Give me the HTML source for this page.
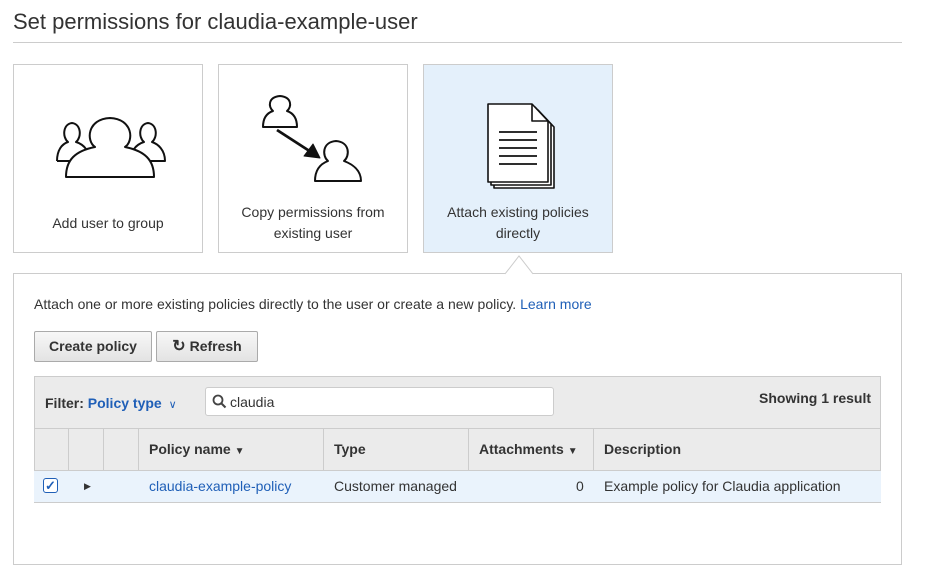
<!DOCTYPE html><html><head><style>
body{margin:0;width:932px;height:555px;background:#fff;font-family:"Liberation Sans",sans-serif;color:#333;position:relative;overflow:hidden}
.a{position:absolute}
h1{position:absolute;left:13px;top:9px;margin:0;font-weight:normal;font-size:22px;color:#333}
.card{position:absolute;top:64px;width:188px;height:187px;border:1px solid #ccc;background:#fff;text-align:center;font-size:14px;color:#333}
.card .t{position:absolute;left:0;right:0;line-height:21px}
.btn{position:absolute;top:331px;height:29px;border:1px solid #aaa;border-radius:2px;background:linear-gradient(#f7f7f7,#e3e3e3);font-weight:bold;font-size:14px;line-height:29px;text-align:center;color:#333}
.th{position:absolute;top:428px;height:42px;border-right:1px solid #ccc;font-weight:bold;font-size:14px;line-height:42px;padding-left:10px;box-sizing:border-box}
.td{position:absolute;top:470px;height:33px;font-size:14px;line-height:33px}
</style></head><body>
<h1>Set permissions for claudia-example-user</h1>
<div class="a" style="left:13px;top:42px;width:889px;height:1px;background:#ccc"></div>

<div class="card" style="left:13px"><div class="t" style="top:148px">Add user to group</div></div>
<div class="card" style="left:218px"><div class="t" style="top:137px">Copy permissions from<br>existing user</div></div>
<div class="card" style="left:423px;background:#e4f0fb"><div class="t" style="top:137px">Attach existing policies<br>directly</div></div>

<svg class="a" style="left:0;top:0" width="620" height="260" viewBox="0 0 620 260" fill="#fff" stroke="#111" stroke-width="2" stroke-linejoin="round">
<!-- group -->
<path d="M57 161 C57 150 62 144 68 142 C62 137 63 124 72 123 C81 124 82 137 76 142 C80 143 84 146 86 149"/>
<path d="M134 149 C136 146 140 143 144 142 C138 137 139 124 148 123 C157 124 158 137 152 142 C158 144 165 150 165 161 L148 161"/>
<path d="M57 161 L72 161"/>
<path d="M66 177 C66 160 75 151 95 147 C86 141 87 119 110 118 C133 119 134 141 125 147 C145 151 154 160 154 177 Z"/>
<!-- copy -->
<path d="M263 127 C263 118 267 113 273 111 C268 107 268 97 280 96 C292 97 292 107 287 111 C293 113 297 118 297 127 Z"/>
<path d="M315 181 C315 170 320 164 328 161 C322 156 322 142 336 141 C350 142 350 156 344 161 C352 164 361 170 361 181 Z"/>
<path d="M277 130 L311 152" stroke-width="2.8"/><path d="M304 156 L320 158 L313 144 Z" fill="#111" stroke-width="1"/>
<!-- doc -->
<g transform="translate(486,103)" stroke-width="1.6">
<path d="M8 7 L52 7 L68 24 L68 85 L8 85 Z"/>
<path d="M5 4 L49 4 L65 21 L65 82 L5 82 Z"/>
<path d="M2 1 L46 1 L62 18 L62 79 L2 79 Z"/>
<path d="M46 1 L46 18 L62 18" fill="none"/>
<path d="M13 29 H51 M13 37 H51 M13 45 H51 M13 53 H51 M13 61 H51" stroke-width="1.8"/>
</g>
</svg>

<div class="a" style="left:13px;top:273px;width:887px;height:290px;border:1px solid #ccc"></div>
<svg class="a" style="left:505px;top:255px" width="28" height="20"><path d="M0 19 L14 1 L28 19" fill="#fff" stroke="#ccc"/><rect x="1" y="19" width="26" height="2" fill="#fff"/></svg>

<div class="a" style="left:34px;top:296px;font-size:14px">Attach one or more existing policies directly to the user or create a new policy. <span style="color:#1f5fb7">Learn more</span></div>
<div class="btn" style="left:34px;width:116px">Create policy</div>
<div class="btn" style="left:156px;width:100px"><span style="font-size:16px">&#8635;</span> Refresh</div>

<div class="a" style="left:34px;top:376px;width:847px;height:127px;background:#ebebeb;border:1px solid #ccc;box-sizing:border-box"></div>
<div class="a" style="left:45px;top:395px;font-size:14px;font-weight:bold">Filter: <span style="color:#1f5fb7">Policy type</span> <span style="color:#1f5fb7;font-weight:normal;font-size:11px">&nbsp;&#8744;</span></div>
<div class="a" style="left:205px;top:387px;width:349px;height:29px;background:#fff;border:1px solid #ccc;border-radius:3px;box-sizing:border-box"></div>
<svg class="a" style="left:212px;top:394px" width="15" height="15"><circle cx="6" cy="6" r="4.5" fill="none" stroke="#444" stroke-width="1.8"/><path d="M9.5 9.5 L13.5 13.5" stroke="#444" stroke-width="2"/></svg>
<div class="a" style="left:230px;top:394px;font-size:14px">claudia</div>
<div class="a" style="left:759px;top:390px;font-size:14px;font-weight:bold">Showing 1 result</div>

<div class="a" style="left:34px;top:428px;width:847px;height:1px;background:#ccc"></div>
<div class="th" style="left:34px;width:35px"></div>
<div class="th" style="left:69px;width:35px"></div>
<div class="th" style="left:104px;width:35px"></div>
<div class="th" style="left:139px;width:185px">Policy name <span style="font-size:10px">&#9660;</span></div>
<div class="th" style="left:324px;width:145px">Type</div>
<div class="th" style="left:469px;width:125px">Attachments <span style="font-size:10px">&#9660;</span></div>
<div class="th" style="left:594px;width:287px;border-right:none">Description</div>
<div class="a" style="left:34px;top:470px;width:847px;height:33px;background:#eaf3fc;border-top:1px solid #ccc;border-bottom:1px solid #ccc;box-sizing:border-box"></div>
<div class="a" style="left:43px;top:478px;width:15px;height:15px;border:1px solid #1f5fb7;border-radius:3px;background:#fff;box-sizing:border-box;font-size:13px;line-height:13px;text-align:center;color:#1f5fb7;font-weight:bold">&#10003;</div>
<div class="td" style="left:84px;font-size:9px">&#9654;</div>
<div class="td" style="left:149px;color:#1f5fb7">claudia-example-policy</div>
<div class="td" style="left:334px">Customer managed</div>
<div class="td" style="left:576px">0</div>
<div class="td" style="left:604px">Example policy for Claudia application</div>
</body></html>
